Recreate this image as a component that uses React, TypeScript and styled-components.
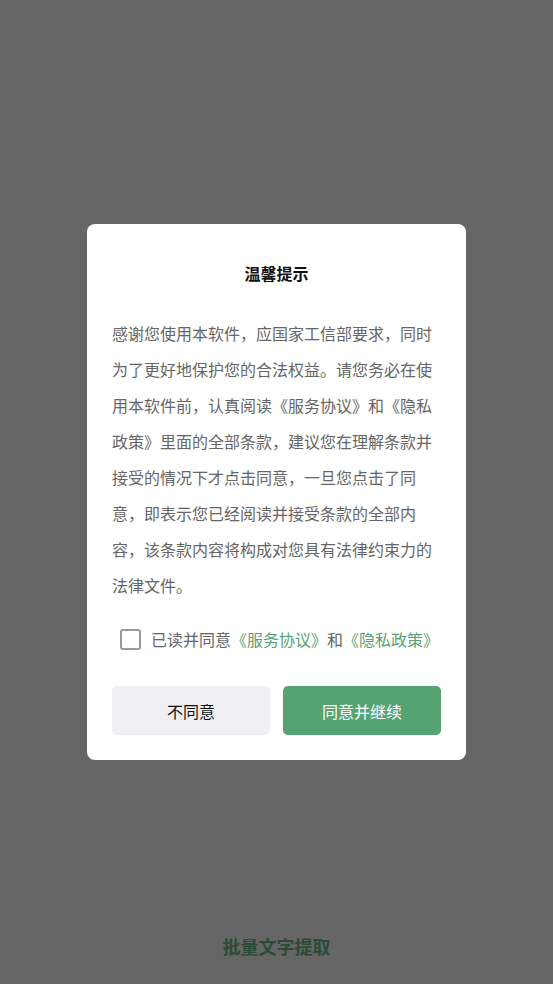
import React, { useState } from "react";
import styled, { createGlobalStyle } from "styled-components";

const Global = createGlobalStyle`
  html, body { margin: 0; padding: 0; }
  body {
    font-family: "Noto Sans CJK SC", "Noto Sans", sans-serif;
    background: #666666;
  }
`;

const Screen = styled.div`
  position: relative;
  width: 553px;
  height: 984px;
  background: #666666;
  display: flex;
  flex-direction: column;
  align-items: center;
`;

const Center = styled.div`
  flex: 1;
  display: flex;
  align-items: flex-start;
  justify-content: center;
  padding-top: 224px;
`;

const Dialog = styled.div`
  width: 379px;
  box-sizing: border-box;
  background: #ffffff;
  border-radius: 8px;
  padding: 0 25px 25px;
  display: flex;
  flex-direction: column;
`;

const Title = styled.h2`
  margin: 0;
  padding-top: 37px;
  height: 24px;
  line-height: 24px;
  text-align: center;
  font-size: 16px;
  font-weight: 700;
  color: #111111;
`;

const Body = styled.p`
  margin: 30px 0 0;
  font-size: 16px;
  line-height: 36px;
  color: #666666;
  text-align: left;
`;

const AgreeRow = styled.label`
  display: flex;
  align-items: center;
  gap: 10px;
  margin-top: 24px;
  padding-left: 8px;
  font-size: 16px;
  line-height: 24px;
  color: #666666;
  cursor: pointer;
`;

const Box = styled.span<{ $checked: boolean }>`
  width: 21px;
  height: 21px;
  box-sizing: border-box;
  border: 2px solid #999999;
  border-radius: 3px;
  background: ${(p) => (p.$checked ? "#55a370" : "#fff")};
  flex-shrink: 0;
`;

const Link = styled.span`
  color: #5a9f72;
`;

const Buttons = styled.div`
  display: flex;
  gap: 13px;
  margin-top: 35px;
`;

const Btn = styled.button<{ $primary?: boolean }>`
  flex: 1;
  height: 49px;
  border: none;
  border-radius: 5px;
  font-family: inherit;
  font-size: 16px;
  background: ${(p) => (p.$primary ? "#55a370" : "#f0f0f2")};
  color: ${(p) => (p.$primary ? "#ffffff" : "#111111")};
  cursor: pointer;
`;

const Footer = styled.div`
  padding-bottom: 25px;
  font-size: 18px;
  font-weight: 700;
  line-height: 26px;
  color: #2c4a35;
`;

export default function App() {
  const [checked, setChecked] = useState(false);
  return (
    <>
      <Global />
      <Screen>
        <Center>
          <Dialog>
            <Title>温馨提示</Title>
            <Body>
              感谢您使用本软件，应国家工信部要求，同时为了更好地保护您的合法权益。请您务必在使用本软件前，认真阅读《服务协议》和《隐私政策》里面的全部条款，建议您在理解条款并接受的情况下才点击同意，一旦您点击了同意，即表示您已经阅读并接受条款的全部内容，该条款内容将构成对您具有法律约束力的法律文件。
            </Body>
            <AgreeRow onClick={() => setChecked(!checked)}>
              <Box $checked={checked} />
              <span>
                已读并同意<Link>《服务协议》</Link>和<Link>《隐私政策》</Link>
              </span>
            </AgreeRow>
            <Buttons>
              <Btn>不同意</Btn>
              <Btn $primary>同意并继续</Btn>
            </Buttons>
          </Dialog>
        </Center>
        <Footer>批量文字提取</Footer>
      </Screen>
    </>
  );
}
